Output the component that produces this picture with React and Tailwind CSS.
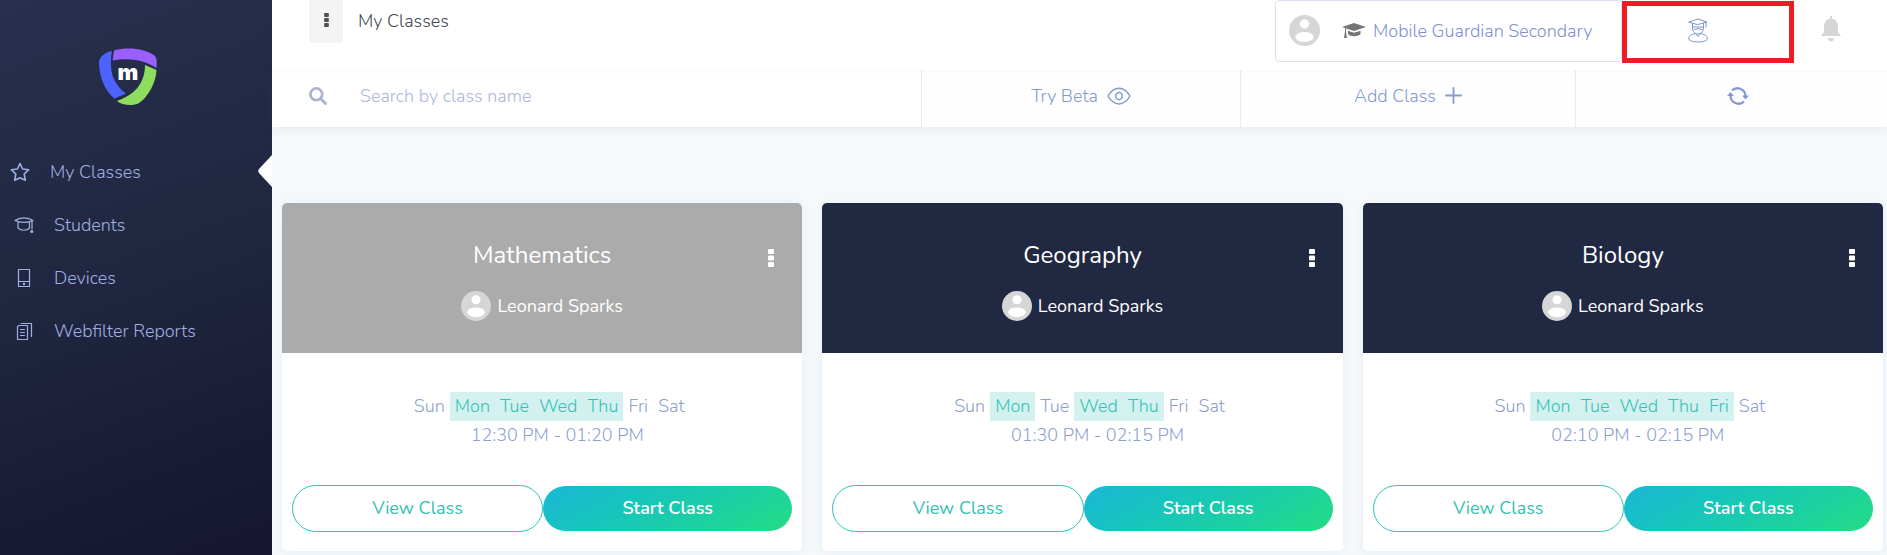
import React from 'react';

const DAYS = ['Sun', 'Mon', 'Tue', 'Wed', 'Thu', 'Fri', 'Sat'];

const classes = [
  { name: 'Mathematics', teacher: 'Leonard Sparks', days: ['Mon', 'Tue', 'Wed', 'Thu'], time: '12:30 PM - 01:20 PM', inactive: true },
  { name: 'Geography', teacher: 'Leonard Sparks', days: ['Mon', 'Wed', 'Thu'], time: '01:30 PM - 02:15 PM' },
  { name: 'Biology', teacher: 'Leonard Sparks', days: ['Mon', 'Tue', 'Wed', 'Thu', 'Fri'], time: '02:10 PM - 02:15 PM' },
];

function Logo() {
  return (
    <svg viewBox="0 0 58 58" className="w-[58px] h-[58px]" aria-hidden="true">
      <path d="M13 3 C5 5 .5 9 0 14 C0 29 6 43 15.5 50.5 L27 45.5 C18 39 12 29 12 18 C11.700 12 12 8 13 3Z" fill="#4d63ff" />
      <path d="M15.500 2 C31 -1.500 46 1 55 7 C58 9.500 58 13 57.500 20 C46 12.500 31 9.500 13.700 12.500 C14 8.500 14.500 5 15.500 2Z" fill="#9a5fff" />
      <path d="M46 17 L57.500 22 C57 35 49 49 40 55 C34 58.500 23 57.500 18 53 C35 47 46 36 46 17Z" fill="#8fdd5e" />
      <text x="29" y="31.500" textAnchor="middle" fill="#fff" className="font-['Inter',sans-serif] text-[22px] font-black">m</text>
    </svg>
  );
}

function Avatar({ className }) {
  return (
    <svg viewBox="0 0 31 31" className={className} aria-hidden="true">
      <circle cx="15.500" cy="15.500" r="15.500" fill="#d6d6d6" />
      <circle cx="15.500" cy="9" r="4.700" fill="#fff" />
      <ellipse cx="15.500" cy="22" rx="9.200" ry="5" fill="#fff" />
    </svg>
  );
}

function Dots({ className }) {
  return (
    <svg viewBox="0 0 6 18" className={className} fill="currentColor" aria-hidden="true">
      <rect x="0" y="0" width="6" height="5" rx="1" />
      <rect x="0" y="6.500" width="6" height="5" rx="1" />
      <rect x="0" y="13" width="6" height="5" rx="1" />
    </svg>
  );
}

function Line({ className, viewBox = '0 0 20 20', width = 1.2, children }) {
  return (
    <svg viewBox={viewBox} className={className} fill="none" stroke="currentColor" strokeWidth={width} strokeLinejoin="round" strokeLinecap="round" aria-hidden="true">
      {children}
    </svg>
  );
}

const navItems = [
  {
    label: 'My Classes',
    active: true,
    icon: (
      <Line className="w-5 h-5" width={1.6}>
        <path d="M10 1.500 12.600 7 18.700 7.700 14.200 12 15.300 18.300 10 15.800 4.700 18.300 5.800 12 1.300 7.700 7.400 7Z" />
      </Line>
    ),
  },
  {
    label: 'Students',
    icon: (
      <Line className="w-5 h-5">
        <path d="M1 5.500C6 2 14 2 19 5.500C14 8 6 8 1 5.500ZM4 7.500V13C7 16 13 16 15.500 13V7.500M18 6V14" />
        <circle cx="17.800" cy="16.500" r="1" fill="currentColor" />
      </Line>
    ),
  },
  {
    label: 'Devices',
    icon: (
      <Line className="w-5 h-5">
        <path d="M4.500 1.500H15.500V18.500H4.500ZM4.500 13.500H15.500" />
        <circle cx="10" cy="16" r=".6" fill="currentColor" />
      </Line>
    ),
  },
  {
    label: 'Webfilter Reports',
    icon: (
      <Line className="w-5 h-5">
        <path d="M3.500 5.500 5 4.500H13.500V18.500H3.500ZM7 2.500H17.500V15.500M6.500 8.500H10.500M6.500 11.500H10.500M6.500 14.500H10.500" />
      </Line>
    ),
  },
];

function Sidebar() {
  return (
    <aside className="w-[272px] shrink-0 min-h-screen bg-linear-160 from-[#28304e] via-[#20263f] to-[#15152f]">
      <div className="flex justify-center pt-12 pr-4">
        <Logo />
      </div>
      <nav className="mt-[39px]">
        {navItems.map((item) => (
          <a
            key={item.label}
            href="#"
            className={`relative flex items-center h-[53px] text-lg font-light text-[#a0b0e2] ${item.active ? 'pl-[10px] gap-5' : 'pl-[14px] gap-5'}`}
          >
            {item.icon}
            {item.label}
            {item.active && (
              <svg viewBox="0 0 14 32" className="absolute right-0 top-[10px] w-[14px] h-8" aria-hidden="true">
                <path d="M14 0V32L1 18Q-.5 16 1 14Z" fill="#fff" />
              </svg>
            )}
          </a>
        ))}
      </nav>
    </aside>
  );
}

function TopBar() {
  return (
    <header className="relative z-10 flex items-start justify-between h-[70px] bg-white shadow-[0_0_6px_rgba(60,80,120,0.06)]">
      <div className="flex items-start pl-[37px]">
        <button aria-label="Menu" className="flex items-center justify-center w-[34px] h-[43px] pb-1 rounded-b bg-[#f4f4f4] text-[#505050]">
          <Dots className="w-[5px] h-[14px]" />
        </button>
        <h1 className="pt-[7px] pl-[15px] text-lg font-light text-[#404854]">My Classes</h1>
      </div>
      <div className="flex items-start">
        <div className="flex h-[62px] rounded border border-[#dcdfef]">
          <button className="flex items-center pl-[13px] pb-px w-[345px] text-lg font-light text-[#7e90cf]">
            <Avatar className="w-[31px] h-[31px]" />
            <svg viewBox="0 0 24 18" className="w-6 h-[18px] ml-[22px] mr-[7px]" fill="#757575" aria-hidden="true">
              <path d="M12 1 24 5 12 9 4 6.500V9.500L5 16H2L3 9.500V6L0 5Z" />
              <path d="M6 8.700 12 10.700 18.500 8.700V12C16 15 8 15 6 12Z" />
            </svg>
            Mobile Guardian Secondary
          </button>
        </div>
        <button aria-label="Student" className="flex items-center w-[172px] h-[62px] mt-px pb-1 pl-[61px] border-5 border-[#ee1c25] text-[#8096d4]">
          <Line className="w-5 h-[25px]" viewBox="0 0 20 25" width={1}>
            <path d="M1 4 10 1 19 4 10 6.500ZM4.500 5.500V10C4.500 14 7 16 10 16S15.500 14 15.500 10V5.500M4.500 9H15.500M6 11.500Q10 9.500 14 11.500M18 4.500V9M7.500 15.500 10 18.500 12.500 15.500M7.500 15.500C2 17 .8 18 .8 21C1 25 19 25 19.200 21C19.200 18 18 17 12.500 15.500" />
          </Line>
        </button>
        <button aria-label="Notifications" className="flex justify-center w-[73px] pt-4 pr-5 mx-[10px] text-[#d6d6d6]">
          <svg viewBox="0 0 20 26" className="w-5 h-[26px]" fill="currentColor" aria-hidden="true">
            <path d="M9 0H11V2.500C15.500 3.500 17 7 17 11V16L20 20H0L3 16V11C3 7 4.500 3.500 9 2.500ZM7 22H13C13 26.500 7 26.500 7 22Z" />
          </svg>
        </button>
      </div>
    </header>
  );
}

function Toolbar() {
  const cell = 'flex items-center justify-center pb-[6px] gap-[9px] border-l border-[#e6eaf4] bg-[#fefefe]';
  return (
    <div className="grid grid-cols-[649fr_319fr_335fr_312fr] h-[57px] bg-white text-lg font-light text-[#8299d2] shadow-[0_2px_10px_rgba(60,90,110,0.1)]">
      <label className="flex items-center pb-[6px]">
        <span className="flex items-center w-[88px] pl-[37px]">
          <svg viewBox="0 0 18 18" className="w-[18px] h-[18px]" fill="none" stroke="#adb3d0" aria-hidden="true">
            <circle cx="7.300" cy="7.300" r="5.900" strokeWidth="2.700" />
            <path d="M11.800 11.800 16.500 16.500" strokeWidth="3" strokeLinecap="round" />
          </svg>
        </span>
        <input
          type="text"
          aria-label="Search by class name"
          placeholder="Search by class name"
          className="flex-1 min-w-0 bg-transparent outline-none placeholder:text-[#adb6d6]"
        />
      </label>
      <button className={cell}>
        Try Beta
        <Line className="w-6 h-[18px]" viewBox="0 0 24 18" width={1.5}>
          <path d="M1 9C7-1.500 17-1.500 23 9C17 19.500 7 19.500 1 9Z" />
          <ellipse cx="12" cy="9" rx="3.300" ry="3.600" />
        </Line>
      </button>
      <button className={cell}>
        Add Class
        <Line className="w-[17px] h-[17px]" viewBox="0 0 17 17" width={1.8}>
          <path d="M8.500 1V16M1 8.500H16" />
        </Line>
      </button>
      <button aria-label="Refresh" className={`${cell} pl-3`}>
        <svg viewBox="0 0 22 18" className="w-[22px] h-[18px]" fill="none" stroke="currentColor" strokeWidth="2.300" aria-hidden="true">
          <path d="M5 3.500C9-.5 18 1 18.500 9M17 14.500C13 18.500 4 17 3.500 9" />
          <path d="M15 8.500H22L18.500 12.500ZM0 9H7L3.500 5Z" fill="currentColor" stroke="none" />
        </svg>
      </button>
    </div>
  );
}

function ClassCard({ item }) {
  return (
    <article className="rounded-[5px] bg-white shadow-[0_2px_12px_rgba(60,120,140,0.08)]">
      <div className={`relative h-[150px] pt-9 rounded-t-[5px] text-center text-white ${item.inactive ? 'bg-[#ababab]' : 'bg-[#212842]'}`}>
        <h2 className="text-2xl leading-8">{item.name}</h2>
        <div className="flex items-center justify-center mt-5 gap-[6px] text-lg">
          <Avatar className="w-[30px] h-[30px]" />
          {item.teacher}
        </div>
        <button aria-label={`${item.name} options`} className="absolute right-7 top-[46px]">
          <Dots className="w-[6px] h-[18px]" />
        </button>
      </div>
      <div className="pt-[39px] pb-[19px] px-[10px] text-lg font-light text-[#8c9fd0]">
        <div className="flex justify-center pl-[14px] leading-[29px]">
          {DAYS.map((day) => (
            <span key={day} className={`px-[5px] ${item.days.includes(day) ? 'bg-[#d3f1ef] text-[#35c2b4]' : ''}`}>
              {day}
            </span>
          ))}
        </div>
        <p className="pl-[30px] text-center leading-[29px]">{item.time}</p>
        <div className="flex items-center mt-[35px]">
          <button className="flex-1 h-[47px] pb-px rounded-full border border-[#2ec4b6] text-[#35bfb2] font-normal">View Class</button>
          <button className="flex-1 h-[45px] pb-px rounded-full bg-linear-150 from-[#1bb7d6] to-[#25dc82] text-white font-semibold">Start Class</button>
        </div>
      </div>
    </article>
  );
}

export default function App() {
  return (
    <div className="flex min-h-screen bg-[#f5f9fc] font-['Nunito','Lato',sans-serif]">
      <Sidebar />
      <div className="flex-1 min-w-0">
        <TopBar />
        <Toolbar />
        <main className="grid grid-cols-3 gap-5 pt-[76px] pl-[10px] pr-1">
          {classes.map((item) => (
            <ClassCard key={item.name} item={item} />
          ))}
        </main>
      </div>
    </div>
  );
}
